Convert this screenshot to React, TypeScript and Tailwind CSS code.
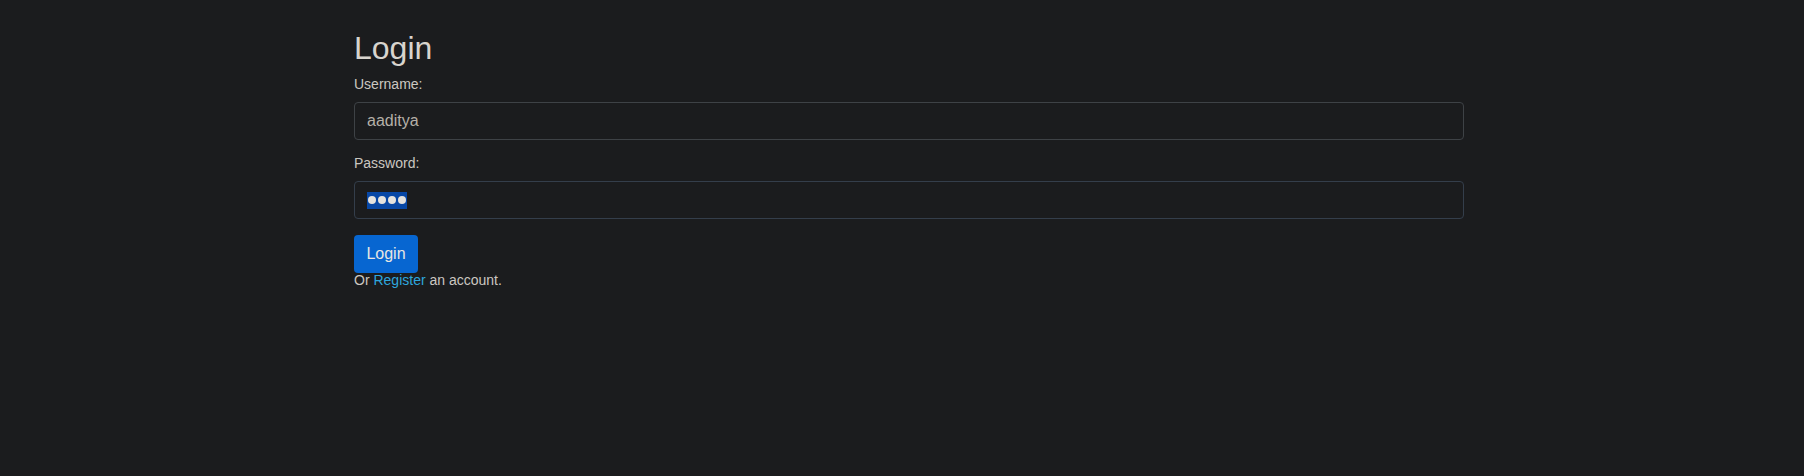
const Field = ({ label, children }: { label: string; children: React.ReactNode }) => (
    <div className="flex flex-col">
        <label className="text-[14px] leading-[21px] text-[#cbc7c1] mb-[7px]">{label}</label>
        {children}
    </div>
)

export default function App() {
    return (
        <div className="min-h-[476px] w-full bg-[#1b1c1e] font-['Liberation_Sans',Arial,sans-serif]">
            <div className="pl-[354px] pt-[29px]">
                <div className="w-[1110px] flex flex-col">
                    <h2 className="text-[32px] leading-[38px] text-[#d8d4ce] mb-[7px]">Login</h2>
                    <Field label="Username:">
                        <div className="h-[38px] border border-[#3e4246] rounded-[4px] bg-[#1b1c1e] pl-[12px] flex items-center text-[16px] text-[#b5b0a8]">
                            aaditya
                        </div>
                    </Field>
                    <div className="h-[13px]" />
                    <Field label="Password:">
                        <div className="h-[38px] border border-[#343e4b] rounded-[4px] bg-[#1b1c1e] pl-[12px] flex items-center">
                            <span className="bg-[#0747a6] h-[17px] px-[1px] flex items-center gap-[2px]">
                                {[0, 1, 2, 3].map((i) => (
                                    <span key={i} className="w-[8px] h-[8px] rounded-full bg-[#e4e2de]" />
                                ))}
                            </span>
                        </div>
                    </Field>
                    <div className="h-[16px]" />
                    <div>
                        <button
                            type="button"
                            className="h-[38px] w-[64px] rounded-[4px] bg-[#0766d1] text-[16px] text-[#e8e6e3]"
                        >
                            Login
                        </button>
                    </div>
                    <p className="-mt-[3px] text-[14px] leading-[21px] text-[#cbc7c1]">
                        Or <a className="text-[#2ea6dd]">Register</a> an account.
                    </p>
                </div>
            </div>
        </div>
    )
}
